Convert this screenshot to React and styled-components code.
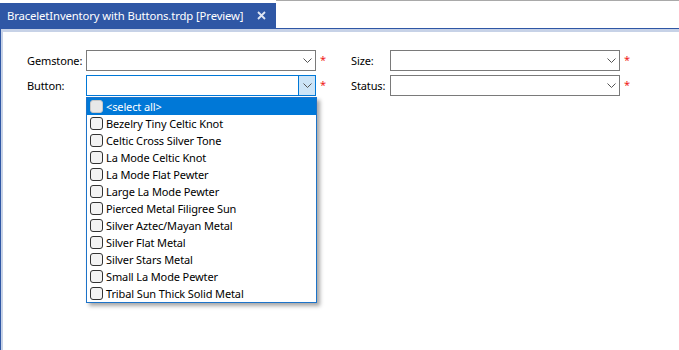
import React from 'react';
import styled, { createGlobalStyle } from 'styled-components';

const GlobalStyle = createGlobalStyle`
  body {
    margin: 0;
    background: #fff;
    font-family: 'Noto Sans', 'Open Sans', sans-serif;
  }
`;

const Page = styled.div`
  width: 679px;
  height: 350px;
  display: flex;
  flex-direction: column;
  overflow: hidden;
  font-size: 11px;
  letter-spacing: -0.12px;
`;

const TabStrip = styled.div`
  height: 28px;
  display: flex;
`;

const Tab = styled.div`
  margin-top: 3px;
  width: 276px;
  box-sizing: border-box;
  padding-left: 7px;
  display: flex;
  align-items: center;
  gap: 14px;
  background: #2f57a5;
  color: #fff;
  font-size: 11.3px;
  white-space: nowrap;
`;

const StripFill = styled.div`
  flex: 1;
  border-top: 1px solid #a9a9a9;
`;

const Panel = styled.div`
  flex: 1;
  border-top: 1px solid #2f57a5;
  border-left: 1px solid #2f57a5;
`;

const Body = styled.div`
  height: 100%;
  box-sizing: border-box;
  border-top: 3px solid #c7d2e7;
  border-left: 2px solid #c7d2e7;
  padding: 18px 0 0 24px;
`;

const Form = styled.div`
  display: grid;
  grid-template-columns: 59px 230px 35px 39px 230px 20px;
  grid-auto-rows: 21px;
  row-gap: 4px;
  color: #000;
`;

const Label = styled.div`
  display: flex;
  align-items: center;
  white-space: nowrap;
`;

const ComboWrap = styled.div`
  position: relative;
`;

const Combo = styled.div`
  height: 100%;
  box-sizing: border-box;
  display: flex;
  justify-content: flex-end;
  border: 1px solid ${(p) => (p.$focused ? '#0078d7' : '#7a7a7a')};
  background: #fff;
`;

const DropButton = styled.div`
  width: 16px;
  display: flex;
  align-items: center;
  justify-content: center;
  background: ${(p) => (p.$focused ? '#cce4f7' : 'transparent')};
  border-left: 1px solid ${(p) => (p.$focused ? '#0078d7' : 'transparent')};
`;

const Asterisk = styled.div`
  padding: 2px 0 0 4px;
  color: #f01a1a;
  font-size: 11px;
  line-height: 16px;
`;

const Popup = styled.ul`
  position: absolute;
  top: 100%;
  left: 0;
  width: 231px;
  margin: 1px 0 0;
  padding: 0;
  list-style: none;
  box-sizing: border-box;
  border: 1px solid #1c73c9;
  background: #fff;
  box-shadow: 3px 3px 4px rgba(0, 0, 0, 0.35);
  z-index: 2;
`;

const Item = styled.li`
  height: 17px;
  display: flex;
  align-items: center;
  gap: 3px;
  padding-left: 3px;
  white-space: nowrap;
  background: ${(p) => (p.$active ? '#0078d7' : 'transparent')};
  color: ${(p) => (p.$active ? '#fff' : '#000')};
`;

const Box = styled.span`
  width: 13px;
  height: 13px;
  box-sizing: border-box;
  border-radius: 3px;
  border: 1px solid ${(p) => (p.$active ? '#c8c8c8' : '#333')};
  background: ${(p) => (p.$active ? '#e8e8e8' : '#f3f3f3')};
`;

const Chevron = () => (
  <svg width="9" height="5" viewBox="0 0 9 5">
    <polyline points="0.5,0.5 4.5,4.5 8.5,0.5" fill="none" stroke="#555" strokeWidth="1" />
  </svg>
);

const CloseIcon = () => (
  <svg width="9" height="9" viewBox="0 0 9 9">
    <path d="M1 1 L8 8 M8 1 L1 8" stroke="#dfe6f3" strokeWidth="1.8" />
  </svg>
);

const buttons = [
  'Bezelry Tiny Celtic Knot',
  'Celtic Cross Silver Tone',
  'La Mode Celtic Knot',
  'La Mode Flat Pewter',
  'Large La Mode Pewter',
  'Pierced Metal Filigree Sun',
  'Silver Aztec/Mayan Metal',
  'Silver Flat Metal',
  'Silver Stars Metal',
  'Small La Mode Pewter',
  'Tribal Sun Thick Solid Metal',
];

const ComboBox = ({ focused, children }) => (
  <ComboWrap>
    <Combo $focused={focused}>
      <DropButton $focused={focused}>
        <Chevron />
      </DropButton>
    </Combo>
    {children}
  </ComboWrap>
);

export default function App() {
  return (
    <Page>
      <GlobalStyle />
      <TabStrip>
        <Tab>
          <span>BraceletInventory with Buttons.trdp [Preview]</span>
          <CloseIcon />
        </Tab>
        <StripFill />
      </TabStrip>
      <Panel>
        <Body>
          <Form>
            <Label>Gemstone:</Label>
            <ComboBox />
            <Asterisk>*</Asterisk>
            <Label>Size:</Label>
            <ComboBox />
            <Asterisk>*</Asterisk>

            <Label>Button:</Label>
            <ComboBox focused>
              <Popup>
                <Item $active>
                  <Box $active />
                  &lt;select all&gt;
                </Item>
                {buttons.map((name) => (
                  <Item key={name}>
                    <Box />
                    {name}
                  </Item>
                ))}
              </Popup>
            </ComboBox>
            <Asterisk>*</Asterisk>
            <Label>Status:</Label>
            <ComboBox />
            <Asterisk>*</Asterisk>
          </Form>
        </Body>
      </Panel>
    </Page>
  );
}
